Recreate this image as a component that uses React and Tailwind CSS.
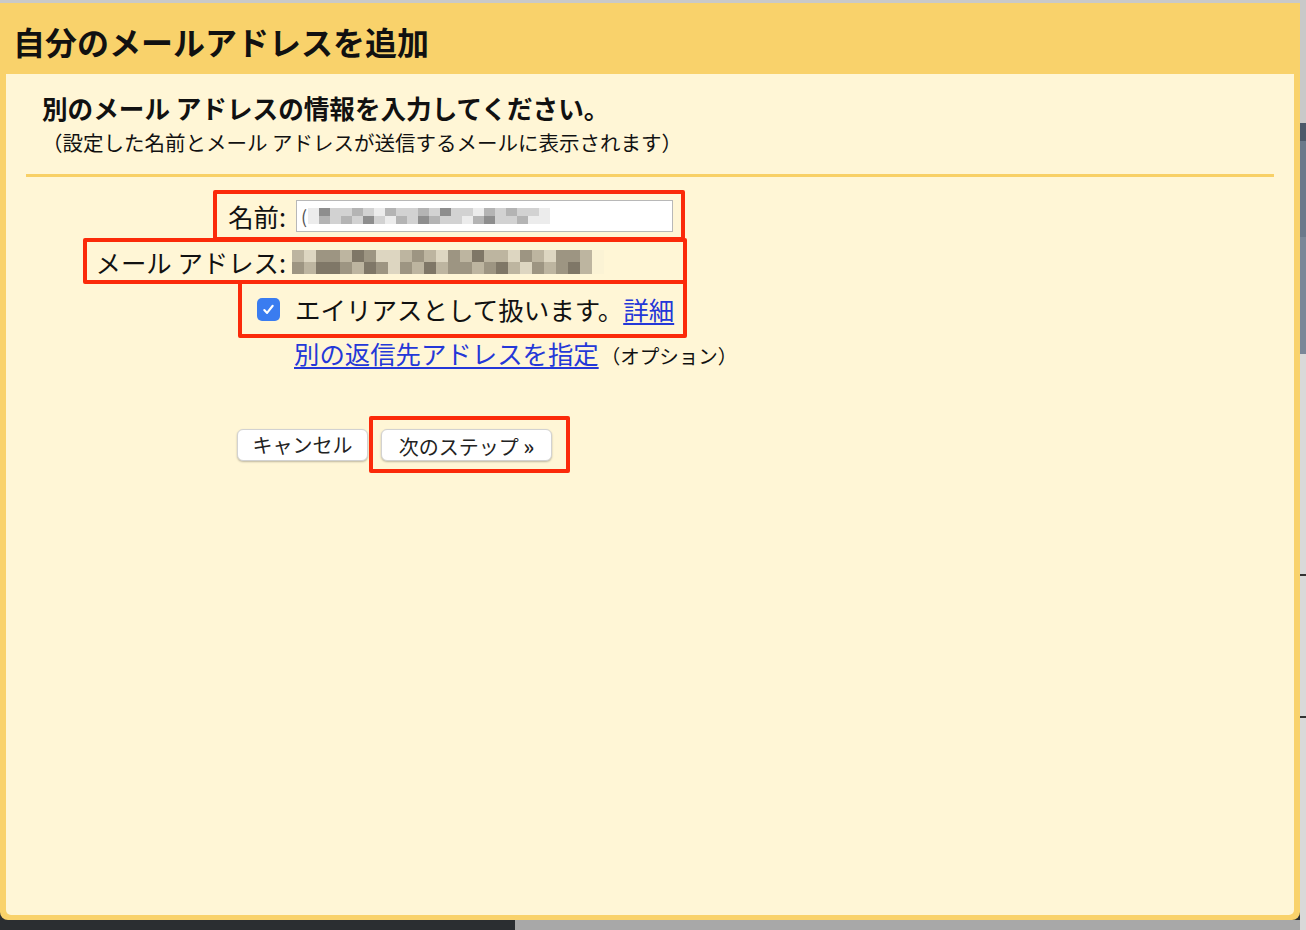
import React from 'react';

const jp = "font-['Noto_Sans_CJK_JP','Noto_Sans',sans-serif]";

// mosaic cells standing in for the blurred personal data
const tone = {
  w: 'bg-[#ffffff]',
  a: 'bg-[#ececec]',
  b: 'bg-[#d2d2d2]',
  c: 'bg-[#b4b4b4]',
  d: 'bg-[#8e8e8e]',
  e: 'bg-[#fbf3d5]',
  f: 'bg-[#ddd6c1]',
  g: 'bg-[#bdb5a0]',
  h: 'bg-[#9d9582]',
  i: 'bg-[#7f7767]',
};

const nameRows = ['adbbcbacbbcbdbbacbcbba', 'acbcbdbacbdcbbacdbbcaa'];
const mailRows = ['gfhhgihffghgfhgiggfhgfhhge', 'hgiihgihfhgighhghigfhghige'];

function Mosaic({ rows, cell }) {
  return (
    <div className="flex flex-col">
      {rows.map((r, i) => (
        <div key={i} className="flex">
          {r.split('').map((k, j) => (
            <div key={j} className={`${cell} ${tone[k]}`} />
          ))}
        </div>
      ))}
    </div>
  );
}

function CheckBox() {
  return (
    <div className="flex h-[23px] w-[23px] items-center justify-center rounded-[5px] bg-[#3a7cf0]">
      <svg width="15" height="15" viewBox="0 0 16 16" fill="none">
        <path d="M3.5 8.5l3 3.2L12.5 4" stroke="white" strokeWidth="2.2" strokeLinecap="round" strokeLinejoin="round" />
      </svg>
    </div>
  );
}

export default function App() {
  return (
    <div className={`relative flex h-[930px] w-[1306px] overflow-hidden bg-[#a8a8a8] ${jp}`}>
      {/* dialog column */}
      <div className="flex w-[1300px] flex-col bg-[#2b2e31]">
        <div className="h-[3px] bg-[#c9c9c9]" />
        <div className="flex flex-1 flex-col rounded-b-[8px] bg-[#f9d26b] px-[6px] pb-[5px]">
          <div className="h-[71px] pl-[7px] pt-[18px]">
            <h1 className="text-[32px] font-bold leading-[40px] text-[#111]">自分のメールアドレスを追加</h1>
          </div>

          <div className="flex-1 rounded-b-[5px] bg-[#fff6d6] text-[#111]">
            <div className="pl-[36px] pt-[18px]">
              <h2 className="text-[25.6px] font-bold leading-[32px]">別のメール アドレスの情報を入力してください。</h2>
              <p className="mt-[4px] text-[20.5px] leading-[28px]">（設定した名前とメール アドレスが送信するメールに表示されます）</p>
            </div>

            <div className="mx-[20px] mt-[18px] h-[3px] bg-[#f8d066]" />

            {/* form */}
            <div className="mt-[23px] flex h-[32px] items-center">
              <div className="w-[280px] text-right text-[25.4px] leading-[32px]">名前:</div>
              <div className="ml-[10px] flex h-[32px] w-[377px] items-center border border-[#b8b8b8] bg-white pl-[4px]">
                <span className="mr-[1px] text-[18px] leading-none text-[#555]">(</span>
                <Mosaic rows={nameRows} cell="h-[8px] w-[11px]" />
              </div>
            </div>

            <div className="mt-[14px] flex h-[32px] items-center">
              <div className="w-[280px] text-right text-[25.4px] leading-[32px]">メール アドレス:</div>
              <div className="ml-[6px]">
                <Mosaic rows={mailRows} cell="h-[12px] w-[12px]" />
              </div>
            </div>

            <div className="mt-[15px] flex h-[32px] items-center">
              <div className="flex w-[280px] justify-end pr-[6px]">
                <CheckBox />
              </div>
              <div className="ml-[9px] text-[25.5px] leading-[32px]">
                エイリアスとして扱います。
                <a href="#" className="text-[#2438d8] underline underline-offset-[3px]">詳細</a>
              </div>
            </div>

            <div className="mt-[13px] flex h-[32px] items-center">
              <div className="w-[280px]" />
              <div className="ml-[8px] flex items-baseline">
                <a href="#" className="text-[25.4px] leading-[32px] text-[#2438d8] underline underline-offset-[3px]">別の返信先アドレスを指定</a>
                <span className="ml-[2px] text-[19.5px]">（オプション）</span>
              </div>
            </div>

            <div className="ml-[231px] mt-[59px] flex gap-[13px]">
              <button className="h-[32px] w-[131px] rounded-[6px] border border-[#d2d2d2] bg-white text-[20px] leading-none text-[#222] shadow-[0_1px_2px_rgba(0,0,0,0.25)]">
                キャンセル
              </button>
              <button className="h-[32px] w-[171px] rounded-[6px] border border-[#d2d2d2] bg-white text-[20px] leading-none text-[#222] shadow-[0_1px_2px_rgba(0,0,0,0.25)]">
                次のステップ <span className="text-[22px] font-medium">»</span>
              </button>
            </div>
          </div>
        </div>
        <div className="flex h-[10px]">
          <div className="w-[515px] bg-[#2b2e31]" />
          <div className="flex-1 bg-[#a8a8a8]" />
        </div>
      </div>

      {/* sliver of the page behind the dialog */}
      <div className="flex w-[6px] flex-col">
        <div className="h-[123px] bg-[#c9c9c9]" />
        <div className="h-[18px] bg-[#4c596a]" />
        <div className="h-[96px] bg-[#6b798b]" />
        <div className="h-[117px] bg-[#7a8798]" />
        <div className="flex-1 bg-[#d9d9d9]">
          <div className="mt-[220px] h-[2px] bg-[#333]" />
          <div className="mt-[140px] h-[2px] bg-[#333]" />
        </div>
      </div>

      {/* red annotation boxes */}
      <div className="pointer-events-none absolute left-[213px] top-[190px] h-[51px] w-[472px] rounded-[2px] border-[4px] border-[#fb2a0a]" />
      <div className="pointer-events-none absolute left-[83px] top-[238px] h-[46px] w-[604px] rounded-[2px] border-[4px] border-[#fb2a0a]" />
      <div className="pointer-events-none absolute left-[238px] top-[280px] h-[58px] w-[449px] rounded-[2px] border-[4px] border-[#fb2a0a]" />
      <div className="pointer-events-none absolute left-[369px] top-[416px] h-[57px] w-[201px] rounded-[2px] border-[4px] border-[#fb2a0a]" />
    </div>
  );
}
